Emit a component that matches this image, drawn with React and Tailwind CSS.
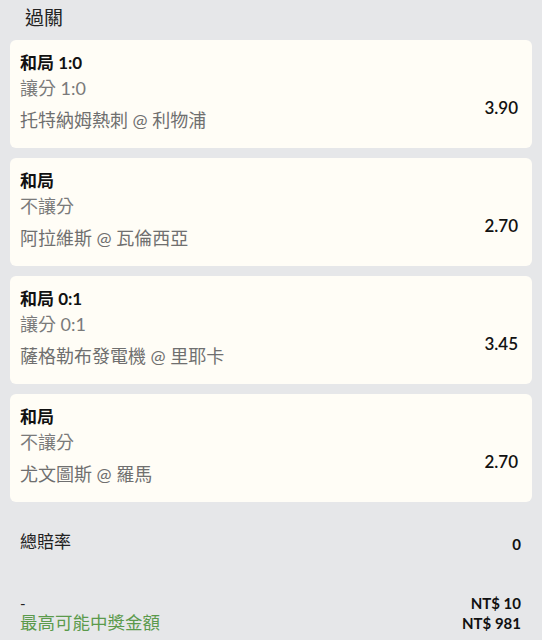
const legs = [
  { pick: "和局 1:0", market: "讓分 1:0", match: "托特納姆熱刺 @ 利物浦", odds: "3.90" },
  { pick: "和局", market: "不讓分", match: "阿拉維斯 @ 瓦倫西亞", odds: "2.70" },
  { pick: "和局 0:1", market: "讓分 0:1", match: "薩格勒布發電機 @ 里耶卡", odds: "3.45" },
  { pick: "和局", market: "不讓分", match: "尤文圖斯 @ 羅馬", odds: "2.70" },
];

export default function App() {
  return (
    <div
      className="w-[542px] h-[640px] overflow-hidden bg-[#e6e7e9] text-[#111]"
      style={{ fontFamily: 'Lato, "Noto Sans CJK TC", sans-serif' }}
    >
      <div className="pl-[25px] h-[36px] text-[19px] leading-[36px] text-[#222]">過關</div>

      {/* bet legs */}
      <div className="mt-[4px] px-[10px] flex flex-col gap-[10px]">
        {legs.map((leg, i) => (
          <div
            key={i}
            className="h-[108px] bg-[#fffdf6] rounded-[6px] pl-[10px] pr-[14px] pt-[10px] flex justify-between"
          >
            <div>
              <div className="text-[17px] leading-[25px] font-bold text-[#111]">{leg.pick}</div>
              <div className="mt-[1px] text-[18px] leading-[25px] text-[#7a7a7a]">{leg.market}</div>
              <div className="mt-[7px] text-[18px] leading-[25px] text-[#6f6f6f]">{leg.match}</div>
            </div>
            <div className="self-end mb-[30px] text-[17px] leading-[20px] font-semibold text-[#111]">
              {leg.odds}
            </div>
          </div>
        ))}
      </div>

      {/* summary */}
      <div className="mt-[28px] pl-[20px] pr-[21px] flex justify-between items-center h-[24px]">
        <span className="text-[17px] text-[#222]">總賠率</span>
        <span className="text-[15px] font-bold mt-[4px] text-[#111]">0</span>
      </div>

      <div className="mt-[39px] pl-[20px] pr-[21px] flex justify-between">
        <div className="flex flex-col">
          <span className="h-[20px] text-[15px] leading-[20px] text-[#222]">-</span>
          <span className="h-[20px] text-[17.5px] leading-[20px] text-[#5b9a4c]">最高可能中獎金額</span>
        </div>
        <div className="flex flex-col items-end">
          <span className="h-[20px] text-[15px] leading-[20px] font-bold text-[#111]">NT$ 10</span>
          <span className="h-[20px] text-[15px] leading-[20px] font-bold text-[#111]">NT$ 981</span>
        </div>
      </div>
    </div>
  );
}
